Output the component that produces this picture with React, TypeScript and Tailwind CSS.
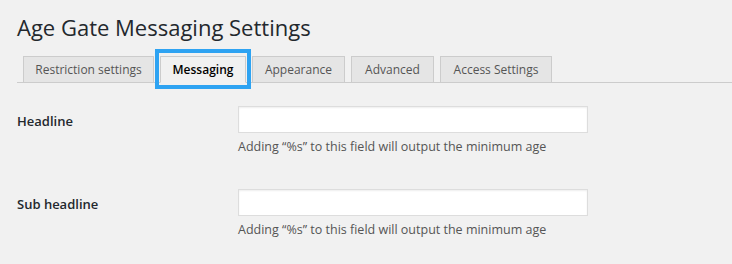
import React from 'react'

const tabs = [
  { name: 'Restriction settings', width: 'w-[131px]' },
  { name: 'Messaging', width: 'w-[86px]' },
  { name: 'Appearance', width: 'w-[93px]' },
  { name: 'Advanced', width: 'w-[83px]' },
  { name: 'Access Settings', width: 'w-[112px]' }
]
const active = 'Messaging'

const fields = [
  { label: 'Headline', help: 'Adding “%s” to this field will output the minimum age' },
  { label: 'Sub headline', help: 'Adding “%s” to this field will output the minimum age' }
]

function NavTabs() {
  return (
    <div className="relative mt-[14px] flex gap-[6px] border-b border-[#ccc] pl-[6px]">
      {tabs.map(({ name, width }) => (
        <div
          key={name}
          className={
            name === active
              ? `-mb-px flex h-[27px] items-center justify-center border border-[#ccc] border-b-[#f1f1f1] bg-[#f1f1f1] text-[12px] font-semibold text-black ${width}`
              : `-mb-px flex h-[27px] items-center justify-center border border-[#ccc] bg-[#e5e5e5] text-[12px] text-[#555] ${width}`
          }
        >
          {name}
        </div>
      ))}
      {/* highlight drawn over the active tab */}
      <div className="pointer-events-none absolute left-[138px] top-[-7px] h-[40px] w-[96px] border-4 border-[#2ea3f2]" />
    </div>
  )
}

export default function App() {
  return (
    <div
      className="h-[264px] w-[732px] overflow-hidden bg-[#f1f1f1] pl-[17px] text-[#23282d]"
      style={{ fontFamily: '"Open Sans", "Noto Sans", sans-serif' }}
    >
      <h1 className="pt-[12px] text-[22px] font-normal leading-[30px]">Age Gate Messaging Settings</h1>
      <NavTabs />
      <div className="pt-[8px]">
        {fields.map(({ label, help }) => (
          <div key={label} className="grid h-[83px] grid-cols-[221px_1fr]">
            <div className="pt-[20px] text-[13px] font-semibold leading-[20px]">{label}</div>
            <div className="pt-[15px]">
              <input
                type="text"
                className="block h-[27px] w-[350px] border border-[#ddd] bg-white shadow-[inset_0_1px_2px_rgba(0,0,0,0.07)] outline-none"
              />
              <p className="mt-[4px] text-[12.5px] leading-[20px] text-[#555]">{help}</p>
            </div>
          </div>
        ))}
      </div>
    </div>
  )
}
